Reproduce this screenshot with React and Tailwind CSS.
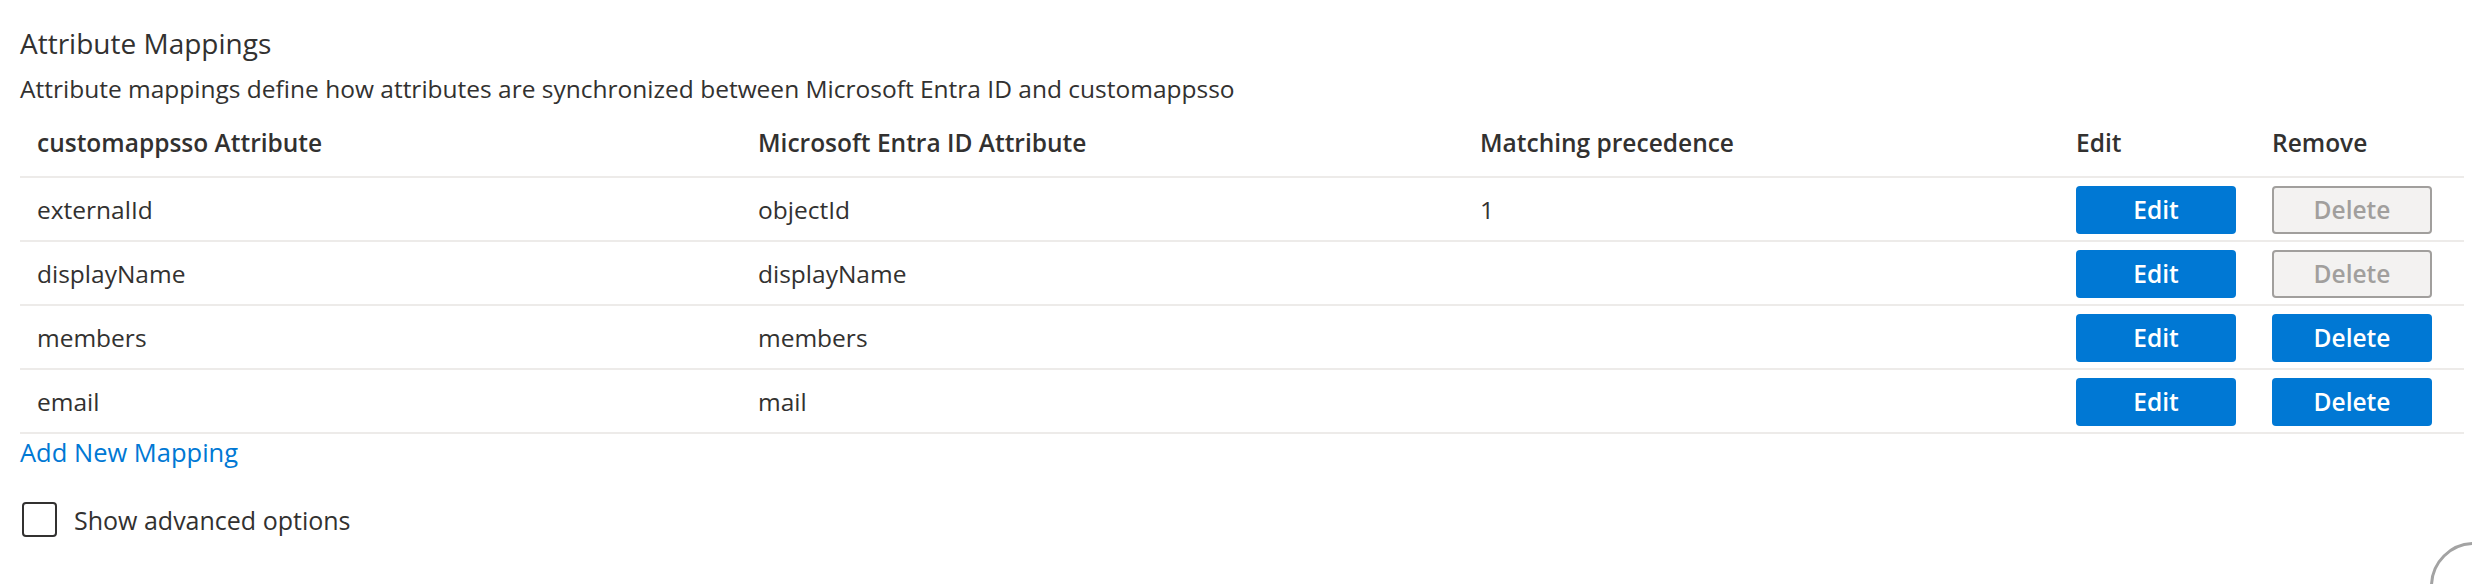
import React from "react";

const rows = [
  { source: "externalId", target: "objectId", precedence: "1", canDelete: false },
  { source: "displayName", target: "displayName", precedence: "", canDelete: false },
  { source: "members", target: "members", precedence: "", canDelete: true },
  { source: "email", target: "mail", precedence: "", canDelete: true },
];

const cols = "grid grid-cols-[721px_722px_596px_196px_209px]";

export default function App() {
  return (
    <div className="relative h-[584px] w-[2472px] overflow-hidden bg-white font-['Open_Sans',sans-serif] text-[#323130]">
      <div className="pl-[20px] pt-[23px]">
        <h2 className="text-[28px] leading-[40px]">Attribute Mappings</h2>
        <p className="mt-[10px] text-[24.5px] leading-[32px]">
          Attribute mappings define how attributes are synchronized between Microsoft Entra ID and customappsso
        </p>

        {/* mappings table */}
        <div className="w-[2444px]">
          <div className={`${cols} h-[73px] items-center border-b-2 border-[#edebe9] pt-[5px] text-[24.5px] font-semibold`}>
            <div className="px-[17px]">customappsso Attribute</div>
            <div className="px-[17px]">Microsoft Entra ID Attribute</div>
            <div className="px-[17px]">Matching precedence</div>
            <div className="px-[17px]">Edit</div>
            <div className="px-[17px]">Remove</div>
          </div>
          {rows.map((r) => (
            <div key={r.source} className={`${cols} h-[64px] items-center border-b-2 border-[#edebe9] pt-[2px] text-[24.5px]`}>
              <div className="px-[17px]">{r.source}</div>
              <div className="px-[17px]">{r.target}</div>
              <div className="px-[17px]">{r.precedence}</div>
              <div className="px-[17px]">
                <button className="h-[48px] w-[160px] rounded-[4px] bg-[#0078d4] text-[24.5px] font-semibold text-white">
                  Edit
                </button>
              </div>
              <div className="px-[17px]">
                {r.canDelete ? (
                  <button className="h-[48px] w-[160px] rounded-[4px] bg-[#0078d4] text-[24.5px] font-semibold text-white">
                    Delete
                  </button>
                ) : (
                  <button
                    disabled
                    className="h-[48px] w-[160px] rounded-[4px] border-2 border-[#a19f9d] bg-[#f3f2f1] text-[24.5px] font-semibold text-[#a19f9d]"
                  >
                    Delete
                  </button>
                )}
              </div>
            </div>
          ))}
        </div>

        <a href="#" className="mt-[2px] block w-fit text-[25.5px] leading-[32px] text-[#0078d4]">
          Add New Mapping
        </a>

        <label className="mt-[34px] flex items-center gap-[17px] pl-[2px]">
          <span className="h-[35px] w-[35px] rounded-[4px] border-2 border-[#323130] bg-white" />
          <span className="text-[25px] leading-[32px]">Show advanced options</span>
        </label>
      </div>

      <div className="absolute left-[2430px] top-[542px] h-[88px] w-[88px] rounded-full border-[3px] border-[#a3a3a3] bg-white" />
    </div>
  );
}
